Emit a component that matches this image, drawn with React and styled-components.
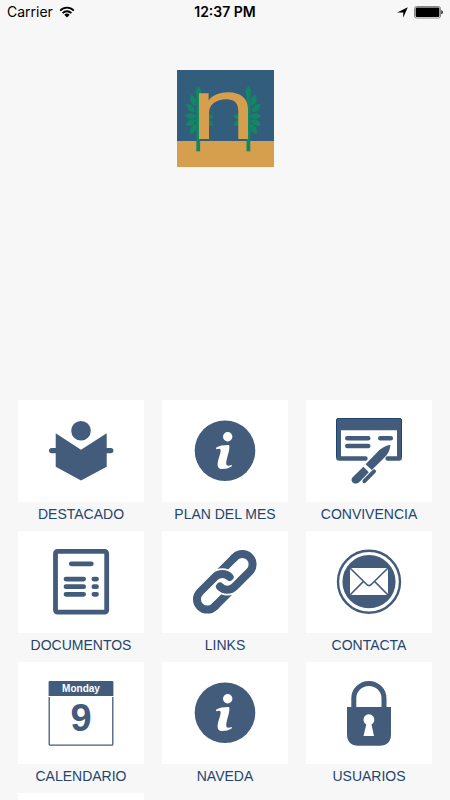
import React from "react";
import styled, { createGlobalStyle } from "styled-components";

const INK = "#435c7b";
const GREEN = "#118764";
const SAND = "#d69f4e";

const GlobalStyle = createGlobalStyle`
  * { box-sizing: border-box; }
  body { margin: 0; background: #f7f7f7; }
`;

const Screen = styled.div`
  display: flex;
  flex-direction: column;
  height: 100vh;
  overflow: hidden;
  background: #f7f7f7;
  font-family: "Liberation Sans", Arial, sans-serif;
`;

const StatusBar = styled.header`
  display: grid;
  grid-template-columns: 1fr auto 1fr;
  align-items: center;
  flex: none;
  height: 24px;
  padding: 0 7px;
  color: #000;
  font: 400 14px/24px Inter, sans-serif;
`;

const StatusGroup = styled.div`
  display: flex;
  align-items: center;
  justify-content: ${(p) => (p.$end ? "flex-end" : "flex-start")};
  gap: 6px;
`;

const Clock = styled.time`
  font-weight: 600;
`;

const Content = styled.main`
  flex: 1;
  min-height: 0;
  overflow-y: auto;
  scrollbar-width: none;
`;

const Hero = styled.section`
  display: flex;
  justify-content: center;
  height: 376px;
  padding-top: 46px;
`;

const MenuGrid = styled.nav`
  display: grid;
  grid-template-columns: repeat(3, 1fr);
  column-gap: 18px;
  padding: 0 18px;
`;

const MenuLink = styled.a`
  display: flex;
  flex-direction: column;
  color: #24456f;
  text-decoration: none;
`;

const Tile = styled.span`
  display: flex;
  align-items: center;
  justify-content: center;
  height: 102px;
  background: #fff;
`;

const Label = styled.span`
  height: 29px;
  padding-top: 2px;
  font-size: 14px;
  line-height: 20px;
  text-align: center;
  white-space: nowrap;
`;

const Icon = styled.svg.attrs({ viewBox: "0 0 72 72", "aria-hidden": true })`
  display: block;
  width: 72px;
  height: 72px;
`;

const IconText = styled.text`
  font-family: "Liberation Sans", Arial, sans-serif;
  font-weight: 700;
  font-size: ${(p) => p.$size}px;
  text-anchor: middle;
`;

function WifiIcon() {
  return (
    <svg width="16" height="12" viewBox="0 0 16 12" fill="none" stroke="#000" aria-hidden="true">
      <path d="M1.2 4.6C5 .7 11 .7 14.8 4.6" strokeWidth="1.8" />
      <path d="M3.6 7.1C6.1 4.6 9.9 4.6 12.4 7.1" strokeWidth="1.8" />
      <path d="M5.3 8.7C6.8 7.2 9.2 7.2 10.7 8.7L8 11.4Z" fill="#000" stroke="none" />
    </svg>
  );
}

function LocationIcon() {
  return (
    <svg width="11" height="11" viewBox="0 0 11 11" aria-hidden="true">
      <path d="M10.8.2 6.2 10.8V5.4H.2Z" fill="#000" />
    </svg>
  );
}

function BatteryIcon() {
  return (
    <svg width="29" height="13" viewBox="0 0 29 13" aria-hidden="true">
      <rect x=".5" y=".5" width="26" height="11.5" rx="2" fill="#fff" stroke="#888" />
      <rect x="1.6" y="1.6" width="23.8" height="9.3" rx=".8" fill="#000" />
      <path d="M27.4 4.2C29.2 4.6 29.2 7.9 27.4 8.3Z" fill="#000" />
    </svg>
  );
}

const leaves = [
  [21.3, 22, 0],
  [16, 30.3, -18],
  [13.6, 38.2, -45],
  [14, 46, -88],
  [13.8, 52.6, -118],
  [16.2, 59, -150],
  [31, 47, 78],
  [31, 53, 110],
];

function Branch() {
  return (
    <g fill={GREEN}>
      <rect x="19.3" y="22" width="3.8" height="59.3" />
      {leaves.map(([x, y, turn]) => (
        <path
          key={`${x}-${y}`}
          transform={`translate(${x} ${y}) rotate(${turn})`}
          d="M0-5.8C3.7-2.6 3.7 2.6 0 5.8C-3.7 2.6-3.7-2.6 0-5.8Z"
        />
      ))}
    </g>
  );
}

function Logo() {
  return (
    <svg width="97" height="97" viewBox="0 0 97 97" role="img" aria-label="Naveda">
      <rect width="97" height="97" fill="#335d7d" />
      <rect y="71" width="97" height="26" fill={SAND} />
      <Branch />
      <g transform="translate(92.6 0) scale(-1 1)">
        <Branch />
      </g>
      <path
        d="M22 23.3H31.6V30.5C35.5 25 43 22.3 51 22.3C64 22.3 71 28.5 71 39.5V69H61.3V41.5C61.3 32.5 57 29.2 49.5 29.2C39 29.2 32 34.5 32 43V69H22Z"
        fill={SAND}
      />
    </svg>
  );
}

function ReaderIcon() {
  return (
    <Icon fill={INK}>
      <circle cx="36" cy="15.7" r="9.8" />
      <rect x="4" y="33" width="12" height="5.2" rx="2.6" />
      <rect x="56.4" y="33" width="12" height="5.2" rx="2.6" />
      <path d="M10.7 18.3 36 34.7 61.7 18.3V51.7L36 65.4 10.7 51.7Z" />
    </Icon>
  );
}

function InfoIcon() {
  return (
    <Icon fill={INK}>
      <circle cx="36" cy="35.7" r="30.3" />
      <circle cx="38.7" cy="21.8" r="4.7" fill="#fff" />
      <path
        d="M27 32.8C30 30.6 34 30 39.8 30L40.4 30.8C40.6 36.5 37.6 43 37.2 48C37 51 39 51.3 43 49.9L42.6 51.6C39.6 53.4 36.2 54.2 33 54.1C29.3 53.9 28.1 51.2 28.8 47.2C29.6 42.8 31.9 38 31.6 35C31.3 33.2 29.7 33.6 27.3 34.2Z"
        fill="#fff"
      />
    </Icon>
  );
}

function FormPenIcon() {
  return (
    <Icon fill={INK}>
      <path d="M5.5 3H66.5Q69 3 69 5.5V42.5Q69 45.7 66 45.7H54.6A2.2 2.2 0 0 1 54.6 41.3H64V15.3H8V41.3H32.5A2.2 2.2 0 0 1 32.5 45.7H6.5Q3 45.7 3 42.5V5.5Q3 3 5.5 3Z" />
      <path
        d="M3.5 42V5.5Q3.5 3.5 5.5 3.5H66.5Q68.5 3.5 68.5 5.5V42"
        fill="none"
        stroke="#1c446f"
      />
      <path
        d="M14.3 23.3H35.2M14.3 31H35.2M47.3 23.3H57.8"
        stroke={INK}
        strokeWidth="4.6"
        strokeLinecap="round"
      />
      <path d="M57.4 29.8C57 35.8 54.3 40.3 50 44L38.8 55 32.6 49.2 44.2 37.2C47.7 33.4 52 30.8 57.4 29.8Z" />
      <path d="M30.4 51.8 35.8 57.2 27.2 66.2C24.8 69 21.5 69.4 19.4 67.2C17.8 65.3 18.6 63.3 20.4 61.6Z" />
      <path d="M41 56.3 31.4 66.2" stroke={INK} strokeWidth="4" strokeLinecap="round" />
    </Icon>
  );
}

function DocumentIcon() {
  return (
    <Icon fill="none" stroke={INK} strokeWidth="4.8" strokeLinecap="round">
      <rect x="10.5" y="5.4" width="51.2" height="60.8" rx="2" />
      <path d="M26.3 17.8H46.3M21 33.1H38.6M21 40.7H38.6M21 48.3H38.6M48.9 33.1H51.5M48.9 40.7H51.5M48.9 48.3H51.5" />
    </Icon>
  );
}

function ChainIcon() {
  return (
    <Icon fill="none" stroke={INK} strokeWidth="8">
      <path d="M31 26 46 11M40.6 45.6 25.6 60.6" />
      <path
        d="M22 35 26 31A10.3 10.3 0 0 1 40.6 31M49.6 36.6 45.6 40.6A10.3 10.3 0 0 1 31 40.6"
        stroke="#fff"
        strokeWidth="11.5"
      />
      <path
        d="M45 12 46 11A10.3 10.3 0 0 1 60.6 25.6L45.6 40.6A10.3 10.3 0 0 1 31 40.6"
        strokeLinecap="round"
      />
      <path
        d="M26.6 59.6 25.6 60.6A10.3 10.3 0 0 1 11 46L26 31A10.3 10.3 0 0 1 40.6 31"
        strokeLinecap="round"
      />
    </Icon>
  );
}

function MailIcon() {
  return (
    <Icon fill="none" stroke={INK}>
      <circle cx="36" cy="35.7" r="31" strokeWidth="2.4" />
      <circle cx="36" cy="35.7" r="26.6" fill={INK} stroke="none" />
      <rect x="17" y="22" width="38" height="27" fill="#fff" stroke="none" />
      <path d="M17 22 33.5 38.3Q36 41 38.5 38.3L55 22M17 49 30.2 35.6M55 49 41.8 35.6" strokeWidth="1.6" />
    </Icon>
  );
}

function CalendarIcon() {
  return (
    <Icon fill={INK}>
      <path d="M4.7 4H67.3Q68.4 4 68.4 5V19H3.6V5Q3.6 4 4.7 4Z" />
      <path d="M4.2 20V67.2Q4.2 68.2 5.2 68.2H66.8Q67.8 68.2 67.8 67.2V20" fill="none" stroke={INK} strokeWidth="1.3" />
      <IconText x="36" y="15" $size={10} fill="#fff">
        Monday
      </IconText>
      <IconText x="36" y="54" $size={38}>
        9
      </IconText>
    </Icon>
  );
}

function LockIcon() {
  return (
    <Icon fill={INK}>
      <path d="M20.8 32V21.5A15 15 0 0 1 51 21.5V32" fill="none" stroke={INK} strokeWidth="5" />
      <path d="M14 30H58V57Q58 68.7 46.5 68.7H25.5Q14 68.7 14 57Z" />
      <path d="M33.3 47.6A5.5 5.5 0 1 1 38.5 47.6L41 59H30.5Z" fill="#fff" />
    </Icon>
  );
}

const items = [
  { label: "DESTACADO", Glyph: ReaderIcon },
  { label: "PLAN DEL MES", Glyph: InfoIcon },
  { label: "CONVIVENCIA", Glyph: FormPenIcon },
  { label: "DOCUMENTOS", Glyph: DocumentIcon },
  { label: "LINKS", Glyph: ChainIcon },
  { label: "CONTACTA", Glyph: MailIcon },
  { label: "CALENDARIO", Glyph: CalendarIcon },
  { label: "NAVEDA", Glyph: InfoIcon },
  { label: "USUARIOS", Glyph: LockIcon },
];

export default function App() {
  return (
    <Screen>
      <GlobalStyle />
      <StatusBar>
        <StatusGroup>
          <span>Carrier</span>
          <WifiIcon />
        </StatusGroup>
        <Clock>12:37 PM</Clock>
        <StatusGroup $end>
          <LocationIcon />
          <BatteryIcon />
        </StatusGroup>
      </StatusBar>
      <Content>
        <Hero>
          <Logo />
        </Hero>
        <MenuGrid>
          {items.map(({ label, Glyph }) => (
            <MenuLink key={label} href="#">
              <Tile>
                <Glyph />
              </Tile>
              <Label>{label}</Label>
            </MenuLink>
          ))}
          <Tile />
        </MenuGrid>
      </Content>
    </Screen>
  );
}
